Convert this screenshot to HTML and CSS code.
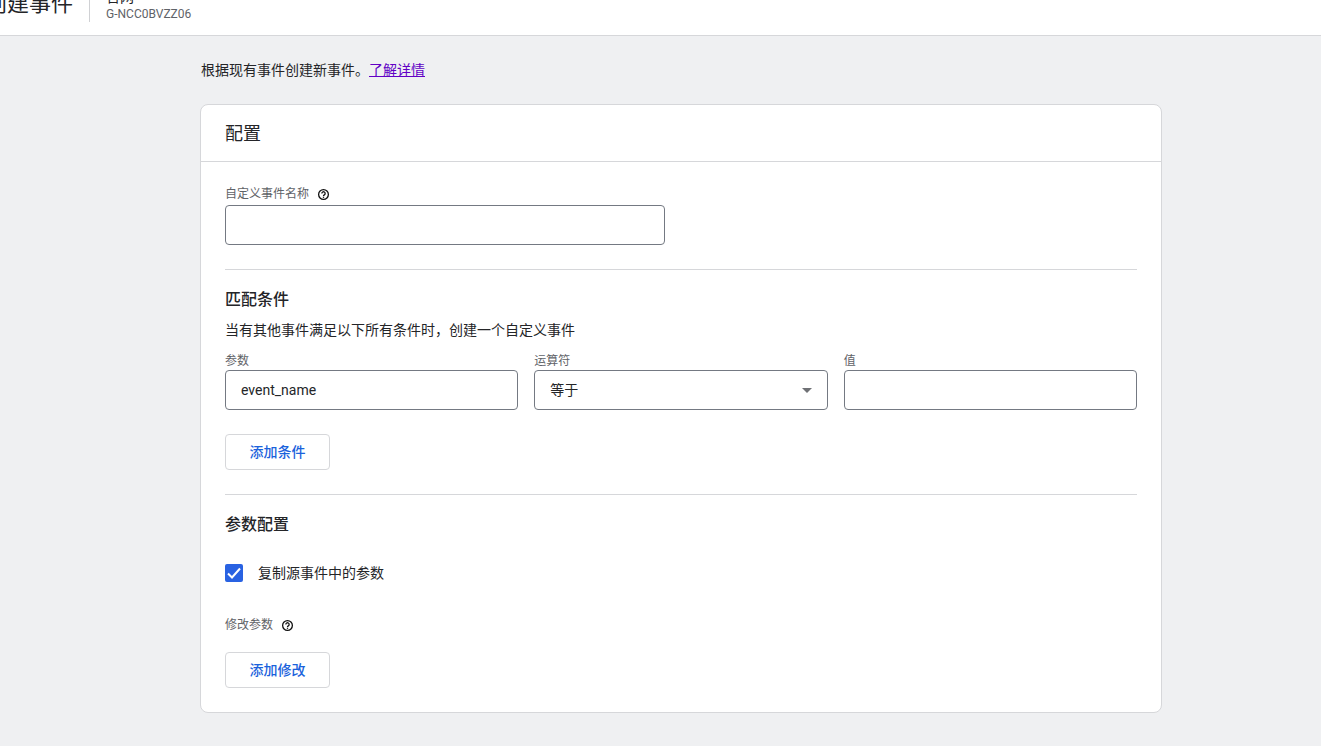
FILE: index.html
```html
<!DOCTYPE html>
<html lang="zh-CN">
<head>
<meta charset="utf-8">
<meta name="viewport" content="width=device-width, initial-scale=1">
<title>创建事件</title>
<link rel="stylesheet" href="styles.css">
</head>
<body>
<header class="topbar">
  <h1 class="topbar-title">创建事件</h1>
  <div class="stream">
    <span class="stream-name">官网</span>
    <span class="stream-id">G-NCC0BVZZ06</span>
  </div>
</header>
<main class="page">
  <p class="intro">根据现有事件创建新事件。<a class="link" href="#">了解详情</a></p>
  <form class="card">
    <h2 class="card-title">配置</h2>
    <section class="section section-name">
      <div class="label-row">
        <label class="label" for="event-name">自定义事件名称</label>
        <svg class="help" viewBox="0 0 24 24" aria-hidden="true"><circle cx="12" cy="12" r="9"/><path d="M9 10a3 3 0 1 1 4.500 2.600c-1 .600-1.500 1.100-1.500 2"/><path d="M12 16v2.200"/></svg>
      </div>
      <input class="field" id="event-name" type="text">
    </section>
    <section class="section">
      <h3 class="section-title">匹配条件</h3>
      <p class="description">当有其他事件满足以下所有条件时，创建一个自定义事件</p>
      <div class="conditions">
        <div class="condition">
          <label class="label" for="param">参数</label>
          <input class="field" id="param" type="text" value="event_name">
        </div>
        <div class="condition">
          <label class="label" for="operator">运算符</label>
          <div class="select-wrap">
            <select class="field select" id="operator"><option>等于</option></select>
            <svg class="arrow" viewBox="0 0 10 5" aria-hidden="true"><path d="M0 0h10L5 5z"/></svg>
          </div>
        </div>
        <div class="condition">
          <label class="label" for="value">值</label>
          <input class="field" id="value" type="text">
        </div>
      </div>
      <button class="button button-condition" type="button">添加条件</button>
    </section>
    <section class="section">
      <h3 class="section-title">参数配置</h3>
      <div class="check-row">
        <input class="checkbox" id="copy" type="checkbox" checked>
        <label for="copy">复制源事件中的参数</label>
        <svg class="tick" viewBox="0 0 18 18" aria-hidden="true"><path d="M3 9.500l4 4 8-9"/></svg>
      </div>
      <div class="label-row modify">
        <span class="label">修改参数</span>
        <svg class="help" viewBox="0 0 24 24" aria-hidden="true"><circle cx="12" cy="12" r="9"/><path d="M9 10a3 3 0 1 1 4.500 2.600c-1 .600-1.500 1.100-1.500 2"/><path d="M12 16v2.200"/></svg>
      </div>
      <button class="button button-modify" type="button">添加修改</button>
    </section>
  </form>
</main>
</body>
</html>
```
FILE: styles.css
```css
* {
  box-sizing: border-box;
}

body {
  margin: 0;
  min-height: 100vh;
  background: #eff0f2;
  color: #242528;
  font: 14px/20px Roboto, "Noto Sans CJK SC", sans-serif;
}

h1, h2, h3, p {
  margin: 0;
}

input, select, button {
  font: inherit;
  color: inherit;
}

.topbar {
  display: flex;
  align-items: flex-end;
  height: 36px;
  padding-bottom: 13px;
  overflow: hidden;
  background: #fff;
  border-bottom: 1px solid #d6d7da;
}

.topbar-title {
  margin-left: -15px;
  padding-right: 16px;
  border-right: 1px solid #d0d1d4;
  font-size: 22px;
  line-height: 36px;
  font-weight: 400;
  white-space: nowrap;
}

.stream {
  display: flex;
  flex-direction: column;
  padding-left: 16px;
}

.stream-name {
  line-height: 18px;
}

.stream-id {
  color: #5f6368;
  font-size: 12px;
  line-height: 16px;
}

.page {
  padding: 24px 159px 33px 200px;
}

.intro {
  padding-left: 1px;
}

.link {
  color: #6200c5;
}

.card {
  margin-top: 24px;
  background: #fff;
  border: 1px solid #d6d7da;
  border-radius: 8px;
}

.card-title {
  padding: 17px 24px 15px;
  border-bottom: 1px solid #d6d7da;
  font-size: 18px;
  line-height: 24px;
  font-weight: 400;
}

.section {
  margin: 0 24px;
  padding: 18px 0 24px;
}

.section + .section {
  border-top: 1px solid #d6d7da;
}

.section-name {
  padding-top: 24px;
}

.section-title {
  font-size: 16px;
  line-height: 24px;
  font-weight: 500;
}

.description {
  margin-top: 8px;
}

.label-row {
  display: flex;
  align-items: center;
  gap: 8px;
}

.label {
  display: block;
  color: #5f6368;
  font-size: 12px;
  line-height: 17px;
}

.help {
  width: 13px;
  height: 13px;
  fill: none;
  stroke: #111;
  stroke-width: 2.4;
}

.field {
  display: block;
  width: 100%;
  height: 40px;
  padding: 0 15px;
  background: #fff;
  border: 1px solid #747982;
  border-radius: 4px;
}

.section-name .field {
  max-width: 440px;
  margin-top: 2px;
}

.conditions {
  display: grid;
  grid-template-columns: repeat(3, 1fr);
  gap: 16px;
  margin-top: 13px;
}

.select-wrap {
  position: relative;
}

.select {
  appearance: none;
}

.arrow {
  position: absolute;
  right: 16px;
  top: 18px;
  width: 10px;
  height: 5px;
  fill: #6f7175;
  pointer-events: none;
}

.button {
  display: block;
  height: 36px;
  padding: 0 23px;
  min-width: 105px;
  background: #fff;
  border: 1px solid #d6d7da;
  border-radius: 4px;
  color: #1a62dc;
  font-weight: 500;
}

.button-condition {
  margin-top: 24px;
}

.button-modify {
  margin-top: 18px;
}

.check-row {
  position: relative;
  display: flex;
  align-items: center;
  gap: 15px;
  margin-top: 26px;
}

.checkbox {
  appearance: none;
  width: 18px;
  height: 18px;
  margin: 0;
  border: 2px solid #5f6368;
  border-radius: 2px;
}

.checkbox:checked {
  background: #2962e2;
  border-color: #2962e2;
}

.tick {
  position: absolute;
  left: 0;
  top: 1px;
  width: 18px;
  height: 18px;
  fill: none;
  stroke: #fff;
  stroke-width: 2;
  pointer-events: none;
}

.checkbox:not(:checked) ~ .tick {
  display: none;
}

.modify {
  margin-top: 34px;
}
```
